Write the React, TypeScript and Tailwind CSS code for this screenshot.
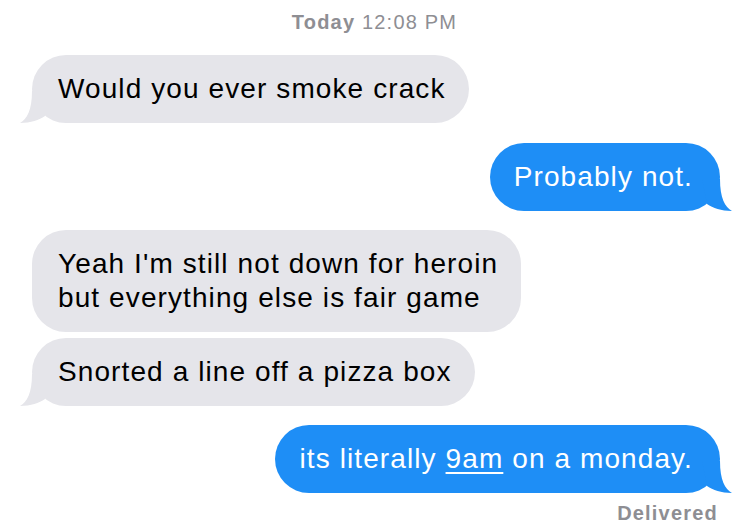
const gray = "#e5e5ea";
const blue = "#1e8ef6";

function Tail({ side, color }: { side: "left" | "right"; color: string }) {
  const left = side === "left";
  return (
    <svg
      width="40"
      height="32"
      viewBox="0 0 40 32"
      className={left ? "absolute bottom-0 -left-[12px]" : "absolute bottom-0 -right-[12px] -scale-x-100"}
    >
      <path d="M12 0 C12 19 7 28 0 32 C11 32 19 29 25 25 L30 0 Z" fill={color} />
    </svg>
  );
}

function Bubble({
  side,
  tail,
  children,
}: {
  side: "left" | "right";
  tail?: boolean;
  children: React.ReactNode;
}) {
  const left = side === "left";
  return (
    <div className={left ? "flex justify-start" : "flex justify-end"}>
      <div
        className={
          left
            ? "relative rounded-[34px] bg-[#e5e5ea] py-[17px] pl-[26px] pr-[23px] text-[28px] leading-[34px] tracking-[1.1px] text-black"
            : "relative rounded-[34px] bg-[#1e8ef6] py-[17px] pl-[24px] pr-[27px] text-[28px] leading-[34px] tracking-[1.1px] text-white"
        }
      >
        {tail && <Tail side={side} color={left ? gray : blue} />}
        <span className="relative">{children}</span>
      </div>
    </div>
  );
}

export default function App() {
  return (
    <div className="h-[532px] w-[749px] overflow-hidden bg-white font-['Liberation_Sans',Arial,sans-serif]">
      <div className="pt-[10px] text-center text-[20px] leading-[24px] tracking-[1.2px] text-[#8e8e93]">
        <span className="font-bold">Today</span> 12:08 PM
      </div>
      <div className="flex flex-col pl-[32px] pr-[29px] pt-[21px]">
        <Bubble side="left" tail>
          Would you ever smoke crack
        </Bubble>
        <div className="mt-[20px]">
          <Bubble side="right" tail>
            Probably not.
          </Bubble>
        </div>
        <div className="mt-[19px]">
          <Bubble side="left">
            Yeah I'm still not down for heroin
            <br />
            but everything else is fair game
          </Bubble>
        </div>
        <div className="mt-[6px]">
          <Bubble side="left" tail>
            Snorted a line off a pizza box
          </Bubble>
        </div>
        <div className="mt-[19px]">
          <Bubble side="right" tail>
            its literally <span className="underline decoration-[2px] underline-offset-[4px]">9am</span> on a monday.
          </Bubble>
        </div>
        <div className="pr-[2px] pt-[9px] text-right text-[20px] font-bold leading-[22px] tracking-[1.2px] text-[#8e8e93]">
          Delivered
        </div>
      </div>
    </div>
  );
}
